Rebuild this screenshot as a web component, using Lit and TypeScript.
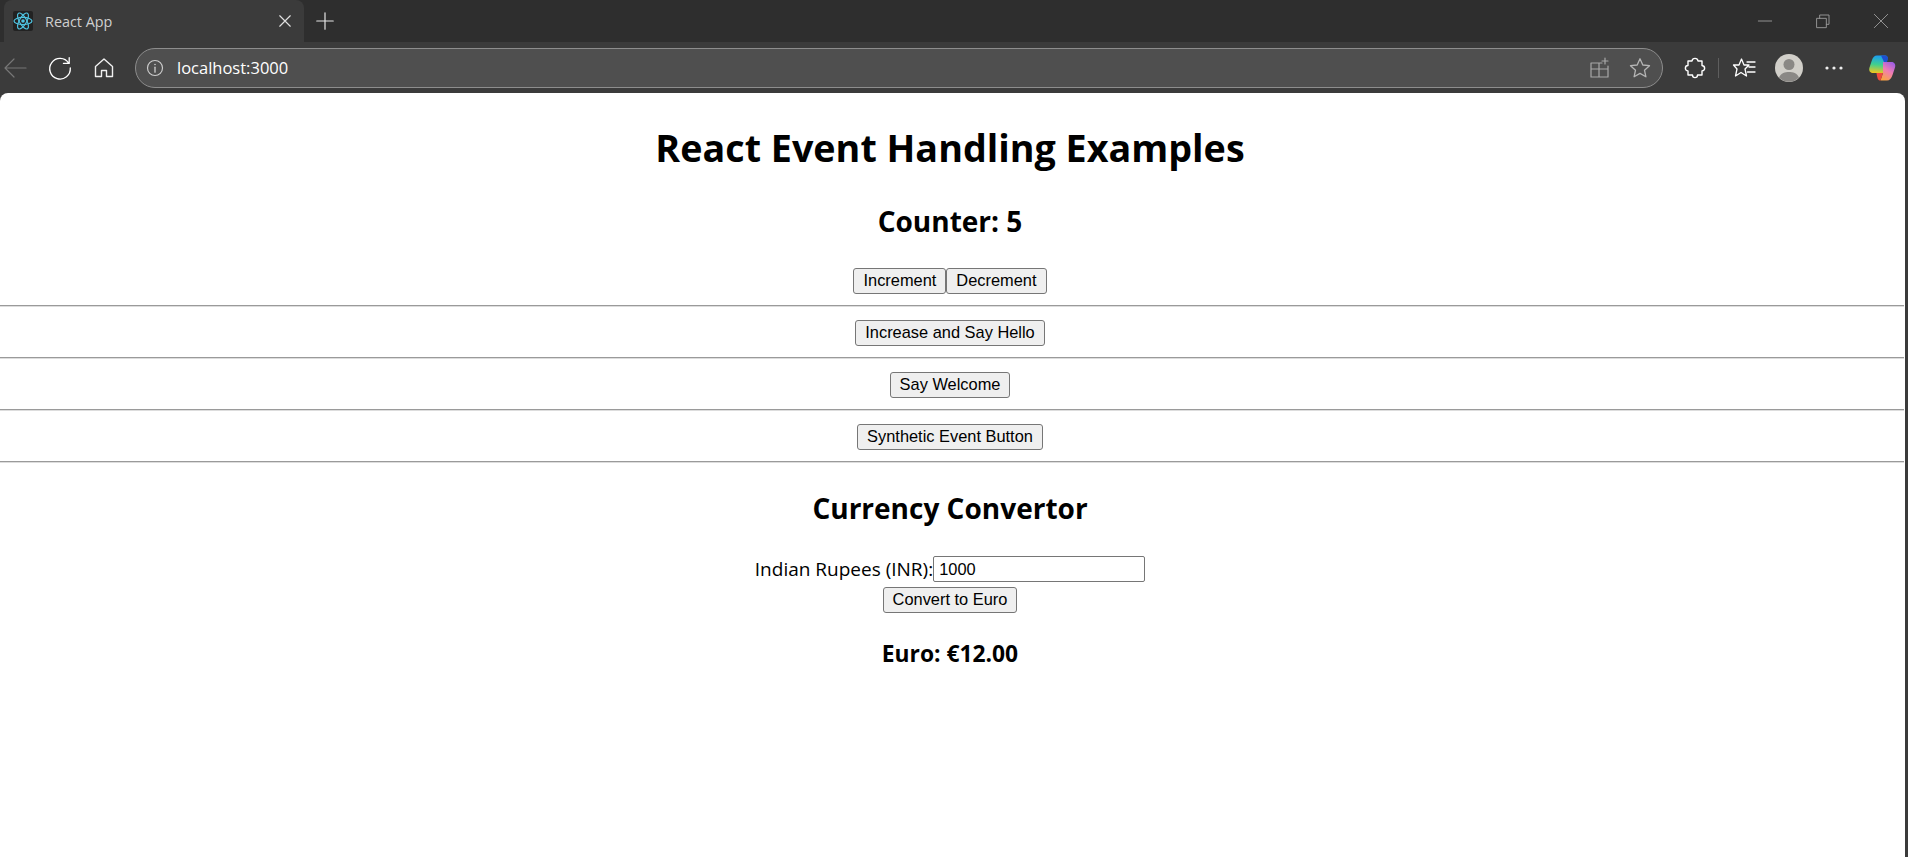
import { LitElement, html, css, svg } from "lit";
import { customElement } from "lit/decorators.js";

const reactLogo = html`<svg width="20" height="20" viewBox="0 0 20 20">
  <rect width="20" height="20" rx="2" fill="#222"></rect>
  <g fill="none" stroke="#4fc3e0" stroke-width="1.2">
    <ellipse cx="10" cy="10" rx="9" ry="3.6"></ellipse>
    <ellipse cx="10" cy="10" rx="9" ry="3.6" transform="rotate(60 10 10)"></ellipse>
    <ellipse cx="10" cy="10" rx="9" ry="3.6" transform="rotate(120 10 10)"></ellipse>
  </g>
  <circle cx="10" cy="10" r="1.8" fill="#4fc3e0"></circle>
</svg>`;

const line = (d: string, color = "#fff", w = 1.2) =>
  svg`<path d=${d} fill="none" stroke=${color} stroke-width=${w} stroke-linecap="round" stroke-linejoin="round"></path>`;

const icon = (size: number, body: unknown) =>
  html`<svg width=${size} height=${size} viewBox="0 0 24 24">${body}</svg>`;

const copilot = html`<svg width="28" height="28" viewBox="0 0 28 28">
  <defs>
    <linearGradient id="cpA" x1="0.3" y1="0" x2="0.2" y2="1">
      <stop offset="0" stop-color="#1b9df2"></stop>
      <stop offset="0.5" stop-color="#3fd08f"></stop>
      <stop offset="1" stop-color="#f7c71a"></stop>
    </linearGradient>
    <linearGradient id="cpB" x1="0.8" y1="0" x2="0.3" y2="1">
      <stop offset="0" stop-color="#9a5ce6"></stop>
      <stop offset="0.5" stop-color="#f07cb4"></stop>
      <stop offset="1" stop-color="#f9a445"></stop>
    </linearGradient>
  </defs>
  <path d="M9 1.5 H17 C19 1.5 20 3 19.5 5 L15 19 H5 C2 19 0.5 16.5 1.5 13.5 L4 6 C5 3 6.5 1.5 9 1.5 Z" fill="url(#cpA)"></path>
  <path d="M15 8 H23.5 C26.5 8 28 10.5 27 13.5 L24.5 21 C23.5 24.5 21.5 26.5 19 26.5 H12.5 L15 19 Z" fill="url(#cpB)"></path>
  <path d="M8.5 19 H15 L12.5 26.5 H12 C10 26.5 9.2 24 8.5 19 Z" fill="#ef4b3c"></path>
  <path d="M13 1.5 H17 C19 1.5 20.5 3.5 19.8 5.5 L19 8 H16 Z" fill="#1d4fd0"></path>
</svg>`;

@customElement("app-root")
export class AppRoot extends LitElement {
  static styles = css`
    :host {
      display: flex;
      flex-direction: column;
      min-height: 857px;
      background: #3b3b3b;
      overflow: hidden;
    }
    .tabstrip {
      height: 42px;
      background: #2e2e2e;
      display: flex;
      align-items: stretch;
      font-family: "Open Sans", sans-serif;
    }
    .tab {
      width: 300px;
      margin-left: 4px;
      background: #3b3b3b;
      border-radius: 8px 8px 0 0;
      display: flex;
      align-items: center;
      padding: 0 12px 0 9px;
      box-sizing: border-box;
      color: #cfcfcf;
      font-size: 14.4px;
    }
    .tab .title {
      margin-left: 12px;
      flex: 1;
    }
    .plus {
      margin-left: 10px;
      align-self: center;
      display: flex;
    }
    .winctl {
      margin-left: auto;
      display: flex;
      align-items: center;
      gap: 42px;
      padding-right: 19px;
    }
    .toolbar {
      height: 51px;
      display: flex;
      align-items: center;
      box-sizing: border-box;
    }
    .cell {
      display: flex;
      align-items: center;
      justify-content: center;
      width: 44px;
      flex: none;
    }
    .back {
      width: 30px;
      margin-right: 8px;
    }
    .omni {
      width: 1528px;
      height: 40px;
      margin-left: 9px;
      box-sizing: border-box;
      background: #4f4f4f;
      border: 1px solid #8d8d8d;
      border-radius: 20px;
      display: flex;
      align-items: center;
      padding: 0 10px 0 9px;
      color: #fff;
      font: 16.5px "Open Sans", sans-serif;
    }
    .omni .url {
      margin-left: 12px;
      flex: 1;
    }
    .omni .acts {
      display: flex;
      align-items: center;
      gap: 16px;
    }
    .sep {
      width: 1px;
      height: 20px;
      background: #5e5e5e;
      flex: none;
      margin: 0 2px 0 0;
    }
    .tools {
      display: flex;
      align-items: center;
      gap: 1px;
      margin-left: 10px;
    }
    .copilot {
      margin-left: 3px;
    }
    .avatar {
      width: 28px;
      height: 28px;
    }
    .page {
      flex: 1;
      margin-right: 3px;
      background: #fff;
      border-radius: 8px 8px 0 0;
      color: #000;
      text-align: center;
      font-family: "Open Sans", sans-serif;
      font-size: 19px;
      padding-right: 5px;
    }
    h1 {
      font-size: 37.7px;
      margin: 0;
      padding-top: 29px;
      line-height: 52px;
    }
    h2 {
      font-size: 28px;
      margin: 0;
      line-height: 36px;
    }
    .counter {
      padding-top: 29px;
    }
    .row {
      display: block;
      line-height: 26px;
    }
    .first {
      padding-top: 29px;
    }
    button {
      font: 16.4px "Liberation Sans", Arial, sans-serif;
      height: 26px;
      padding: 0 9px 1px;
      box-sizing: border-box;
      background: #efefef;
      border: 1px solid #767676;
      border-radius: 3px;
      color: #000;
      vertical-align: top;
      margin: 0;
    }
    hr {
      margin: 11px -4px 13px 0;
      border: none;
      border-top: 1px solid #9a9a9a;
      border-bottom: 1px solid #ddd;
    }
    .currency {
      padding-top: 14px;
    }
    .form {
      padding-top: 30px;
      line-height: 27px;
    }
    input {
      font: 16.4px "Liberation Sans", Arial, sans-serif;
      width: 212px;
      height: 26px;
      box-sizing: border-box;
      padding: 1px 5px;
      border: 1px solid #767676;
      border-radius: 2px;
      vertical-align: top;
    }
    .convert {
      margin-top: 4px;
    }
    h3 {
      font-size: 22.8px;
      margin: 0;
      padding-top: 26px;
      line-height: 30px;
    }
  `;

  render() {
    return html`
      <div class="tabstrip">
        <div class="tab">
          ${reactLogo}
          <span class="title">React App</span>
          ${icon(14, line("M3 3 21 21M21 3 3 21", "#e0e0e0", 2))}
        </div>
        <div class="plus">${icon(22, line("M12 3V21M3 12H21", "#e6e6e6", 1.3))}</div>
        <div class="winctl">
          ${icon(16, line("M2 12H22", "#9a9a9a", 1.4))}
          ${icon(16, line("M3 8H17V22H3ZM7 8V3H21V17H17", "#9a9a9a", 1.4))}
          ${icon(16, line("M2 2 22 22M22 2 2 22", "#9a9a9a", 1.4))}
        </div>
      </div>
      <div class="toolbar">
        <div class="cell back">${icon(24, line("M2 12H23M11 3 2 12 11 21", "#777", 1.2))}</div>
        <div class="cell">
          ${icon(26, line("M20 7.5A9.5 9.5 0 1 0 21.5 12M20.5 2.5V7.8H15.2", "#fff", 1.2))}
        </div>
        <div class="cell">
          ${icon(24, line("M3.5 10.5 12 3 20.5 10.5V20.5H14.5V14.5H9.5V20.5H3.5Z", "#f0f0f0", 1.4))}
        </div>
        <div class="omni">
          ${icon(20, svg`<circle cx="12" cy="12" r="9" fill="none" stroke="#ccc" stroke-width="1.4"></circle>${line("M12 11V17", "#ccc", 1.6)}<circle cx="12" cy="7.8" r="1" fill="#ccc"></circle>`)}
          <span class="url">localhost:3000</span>
          <div class="acts">
            ${icon(24, line("M3 7H11V21H3ZM11 13H20V21H11M3 13H11M14 7H11M20 10V13M17 2V8M14 5H20", "#a8a8a8", 1.2))}
            ${icon(24, line("M12 2.8 14.8 9 21.5 9.7 16.5 14.2 17.9 20.8 12 17.4 6.1 20.8 7.5 14.2 2.5 9.7 9.2 9Z", "#b5b5b5", 1.3))}
          </div>
        </div>
        <div class="tools">
          <div class="cell">
            ${icon(24, line("M9 5C9.5 1.5 14.5 1.5 15 5H19V9.5C22.5 10 22.5 14.5 19 15V19H14.5C14.5 22.5 9.5 22.5 9.5 19H5V15C1.5 15 1.5 9.5 5 9.5V5Z", "#fff", 1.4))}
          </div>
          <div class="sep"></div>
          <div class="cell">
            ${icon(24, line("M9.5 3 12 9H17L13 13 14.5 20 9 16.5 3.5 20 5 13 1.5 9H7ZM15 6H23M17 11H23M15.5 16H23", "#fff", 1.3))}
          </div>
          <div class="cell">
            <svg class="avatar" viewBox="0 0 28 28">
              <circle cx="14" cy="14" r="14" fill="#d1cfc9"></circle>
              <circle cx="14" cy="10.5" r="5.5" fill="#8a8885"></circle>
              <path d="M4 23.5C6 19 10 18 14 18S22 19 24 23.5A14 14 0 0 1 4 23.5Z" fill="#8a8885"></path>
            </svg>
          </div>
          <div class="cell">
            <svg width="18" height="4" viewBox="0 0 18 4" fill="#eee">
              <circle cx="2" cy="2" r="1.6"></circle>
              <circle cx="9" cy="2" r="1.6"></circle>
              <circle cx="16" cy="2" r="1.6"></circle>
            </svg>
          </div>
          <div class="cell copilot">${copilot}</div>
        </div>
      </div>
      <div class="page">
        <h1>React Event Handling Examples</h1>
        <h2 class="counter">Counter: 5</h2>
        <div class="row first"><button>Increment</button><button>Decrement</button></div>
        <hr />
        <div class="row"><button>Increase and Say Hello</button></div>
        <hr />
        <div class="row"><button>Say Welcome</button></div>
        <hr />
        <div class="row"><button>Synthetic Event Button</button></div>
        <hr />
        <h2 class="currency">Currency Convertor</h2>
        <div class="form">
          <label>Indian Rupees (INR):</label><input value="1000" /><br />
          <button class="convert">Convert to Euro</button>
        </div>
        <h3>Euro: €12.00</h3>
      </div>
    `;
  }
}
